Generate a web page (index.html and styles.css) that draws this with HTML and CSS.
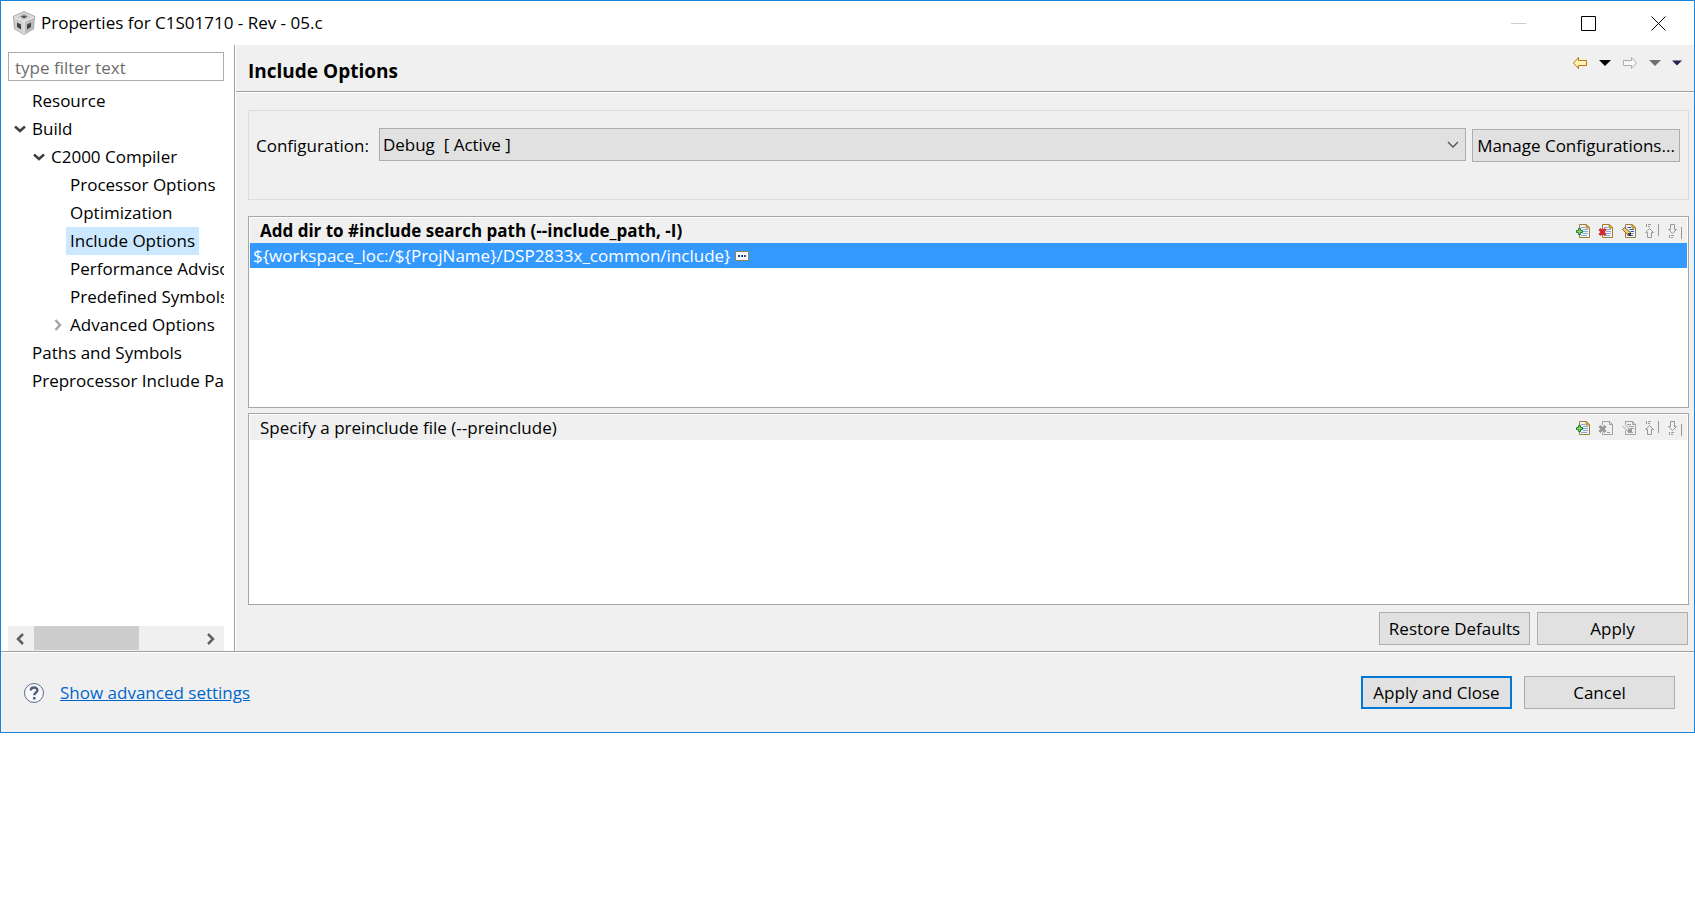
FILE: index.html
```html
<!DOCTYPE html>
<html lang="en">
<head>
    <meta charset="UTF-8">
    <meta name="viewport" content="width=device-width, initial-scale=1.0">
    <title>Properties for C1S01710 - Rev - 05.c</title>
    <link rel="stylesheet" href="styles.css">
</head>
<body>

<!-- Shared icons -->
<svg class="sprite" aria-hidden="true">
    <symbol id="icon-page" viewBox="0 0 16 16">
        <path d="M4.500 1.500h7l3 3v10h-10z" fill="#eef4fc" stroke="#a07c34"/>
        <path d="M11 1.500v3.500h3.500z" fill="#e8b850" stroke="#b8862c"/>
        <path d="M6 4.500h4M8 6.500h5M8 8.500h5M8 10.500h5M6 12.500h6" stroke="#8ba6d0"/>
    </symbol>
    <symbol id="icon-add" viewBox="0 0 16 16">
        <use href="#icon-page"/>
        <path d="M3.500 5.500h2v2h2v2h-2v2h-2v-2h-2v-2h2z" fill="#8fdc5a" stroke="#1d7a3c"/>
    </symbol>
    <symbol id="icon-delete" viewBox="0 0 16 16">
        <use href="#icon-page"/>
        <path d="M1.500 6l6 6M7.500 6l-6 6" stroke="#d42430" stroke-width="3"/>
    </symbol>
    <symbol id="icon-edit" viewBox="0 0 16 16">
        <use href="#icon-page"/>
        <path d="M7 4.500h3M9 6.500h4M10 8.500h3M7 12.500h5" stroke="#3a5a9a"/>
        <path d="M1.500 6.500l2-2 6 5v3h-2z" fill="#efc87c" stroke="#8a6428"/>
        <path d="M7 10h3v3H8z" fill="#333"/>
    </symbol>
    <symbol id="icon-delete-off" viewBox="0 0 16 16">
        <path d="M4.500 5v-3.500h7l3 3v10h-10v-2M11.500 1.500v3h3M9 12.500h3" fill="none" stroke="#a0a0a0"/>
        <path d="M1.500 6l6 6M7.500 6l-6 6" stroke="#989898" stroke-width="3"/>
    </symbol>
    <symbol id="icon-edit-off" viewBox="0 0 16 16">
        <path d="M4.500 4v-2.500h7l3 3v10h-10v-4M11.500 1.500v3h3M6 4.500h4M8 6.500h5M9 8.500h4M7 12.500h5" fill="none" stroke="#a0a0a0"/>
        <path d="M1.500 6l6 6M4 4.500l6 6" fill="none" stroke="#a0a0a0"/>
        <path d="M7 9h4v3H7z" fill="#989898"/>
    </symbol>
    <symbol id="icon-up" viewBox="0 0 16 16">
        <path d="M2.500 1v3M4 1.500h3M4 3.500h2M5.500 5.500l4 4h-2v5h-4v-5h-2z" fill="none" stroke="#989898"/>
        <path d="M14.500 1v12" stroke="#989898"/>
    </symbol>
    <symbol id="icon-down" viewBox="0 0 16 16">
        <path d="M3.500 1.500h4v5h2l-4 4-4-4h2zM2.500 12v3M4 12.500h3M4 14.500h2" fill="none" stroke="#989898"/>
        <path d="M14.500 4v12" stroke="#989898"/>
    </symbol>
    <symbol id="icon-chevron" viewBox="0 0 12 12">
        <path d="M1 3.500l5 4.500 5-4.500" fill="none" stroke="currentColor" stroke-width="2.500"/>
    </symbol>
    <symbol id="icon-caret" viewBox="0 0 12 12">
        <path d="M0 3h12L6 9z" fill="currentColor"/>
    </symbol>
</svg>

<div class="dialog">
    <header class="titlebar">
        <svg class="app-icon" viewBox="0 0 24 24" aria-hidden="true">
            <path d="M12 0l11 5-1 13-10 6-10-6L1 5z" fill="#a8a8a8"/>
            <path d="M12 1l10 4.500L12 10 2 5.500z" fill="#d8d8d8"/>
            <path d="M2 6.500l9.500 4.500v12L3 18z" fill="#d0d0d0"/>
            <path d="M22 6.500L12.500 11v12l8.500-5z" fill="#bcbcbc"/>
            <path d="M12 3.500l4 2-4 2-4-2z" fill="#505050"/>
            <path d="M5 11.500l4 2v5l-4-2.500zM15 13.500l4-2v4.500l-4 2.500z" fill="#444"/>
            <path d="M8.500 2.500l10 4.500M15.500 2.500L5.500 7" stroke="#bbb" stroke-width=".6"/>
            <path d="M2 6l10 4.700L22 6M12 10.700V23" fill="none" stroke="#f4f4f4" stroke-width="1.200"/>
        </svg>
        <h1>Properties for C1S01710 - Rev - 05.c</h1>
        <div class="window-buttons">
            <button type="button" aria-label="Minimize" disabled><svg viewBox="0 0 16 16"><path d="M0 8.500h15" stroke="#ccc"/></svg></button>
            <button type="button" aria-label="Maximize"><svg viewBox="0 0 16 16"><path d="M.5 1.500h14v14H.5z" fill="none" stroke="#000"/></svg></button>
            <button type="button" aria-label="Close"><svg viewBox="0 0 16 16"><path d="M.5 1.500l14 14M14.500 1.500l-14 14" stroke="#000"/></svg></button>
        </div>
    </header>

    <div class="main">
        <nav class="sidebar">
            <input class="filter" type="text" placeholder="type filter text" aria-label="Filter">
            <ul class="tree">
                <li><span class="node">Resource</span></li>
                <li>
                    <span class="node"><svg class="twist"><use href="#icon-chevron"/></svg>Build</span>
                    <ul>
                        <li>
                            <span class="node"><svg class="twist"><use href="#icon-chevron"/></svg>C2000 Compiler</span>
                            <ul>
                                <li><span class="node">Processor Options</span></li>
                                <li><span class="node">Optimization</span></li>
                                <li><span class="node selected">Include Options</span></li>
                                <li><span class="node">Performance Advisor</span></li>
                                <li><span class="node">Predefined Symbols</span></li>
                                <li><span class="node"><svg class="twist closed"><use href="#icon-chevron"/></svg>Advanced Options</span></li>
                            </ul>
                        </li>
                    </ul>
                </li>
                <li><span class="node">Paths and Symbols</span></li>
                <li><span class="node">Preprocessor Include Paths</span></li>
            </ul>
            <div class="scrollbar">
                <button type="button" aria-label="Scroll left"><svg viewBox="0 0 12 12"><path d="M8 1L3 6l5 5" fill="none" stroke="#606060" stroke-width="2.500"/></svg></button>
                <div class="track"><div class="thumb"></div></div>
                <button type="button" aria-label="Scroll right"><svg viewBox="0 0 12 12"><path d="M3 1l5 5-5 5" fill="none" stroke="#606060" stroke-width="2.500"/></svg></button>
            </div>
        </nav>

        <section class="page">
            <div class="page-header">
                <h2>Include Options</h2>
                <div class="history">
                    <button type="button" aria-label="Back"><svg class="arrow" viewBox="0 0 16 14"><path d="M1.500 7l5-5.500v3h8v5h-8v3z" fill="#fff3b8" stroke="#b8780c"/></svg></button>
                    <button type="button" aria-label="Back history"><svg class="caret"><use href="#icon-caret"/></svg></button>
                    <button type="button" aria-label="Forward" disabled><svg class="arrow" viewBox="0 0 16 14"><path d="M14.500 7l-5-5.500v3h-8v5h8v3z" fill="#f6f6f6" stroke="#acacac"/></svg></button>
                    <button type="button" aria-label="Forward history" disabled><svg class="caret muted"><use href="#icon-caret"/></svg></button>
                    <button type="button" aria-label="Menu"><svg class="caret menu"><use href="#icon-caret"/></svg></button>
                </div>
            </div>

            <div class="page-body">
                <div class="config">
                    <label for="configuration">Configuration:</label>
                    <div class="select">
                        <select id="configuration">
                            <option>Debug&nbsp; [ Active ]</option>
                        </select>
                        <svg viewBox="0 0 12 12" aria-hidden="true"><path d="M1 3l5 5 5-5" fill="none" stroke="#505050" stroke-width="1.300"/></svg>
                    </div>
                    <button type="button" class="btn btn-manage">Manage Configurations...</button>
                </div>

                <div class="list">
                    <div class="list-header">
                        <h3 class="strong">Add dir to #include search path (--include_path, -I)</h3>
                        <div class="tools">
                            <button type="button" aria-label="Add"><svg><use href="#icon-add"/></svg></button>
                            <button type="button" aria-label="Delete"><svg><use href="#icon-delete"/></svg></button>
                            <button type="button" aria-label="Edit"><svg><use href="#icon-edit"/></svg></button>
                            <button type="button" aria-label="Move up" disabled><svg><use href="#icon-up"/></svg></button>
                            <button type="button" aria-label="Move down" disabled><svg><use href="#icon-down"/></svg></button>
                        </div>
                    </div>
                    <ul class="rows">
                        <li>${workspace_loc:/${ProjName}/DSP2833x_common/include}
                            <svg class="more" viewBox="0 0 14 10"><path d="M.5.500h13v9H.5z" fill="#f8f8f8" stroke="#8c8468"/><path d="M3 4h2v2H3zM6 4h2v2H6zM9 4h2v2H9z" fill="#2c4c8c"/></svg>
                        </li>
                    </ul>
                </div>

                <div class="list">
                    <div class="list-header">
                        <h3>Specify a preinclude file (--preinclude)</h3>
                        <div class="tools">
                            <button type="button" aria-label="Add"><svg><use href="#icon-add"/></svg></button>
                            <button type="button" aria-label="Delete" disabled><svg><use href="#icon-delete-off"/></svg></button>
                            <button type="button" aria-label="Edit" disabled><svg><use href="#icon-edit-off"/></svg></button>
                            <button type="button" aria-label="Move up" disabled><svg><use href="#icon-up"/></svg></button>
                            <button type="button" aria-label="Move down" disabled><svg><use href="#icon-down"/></svg></button>
                        </div>
                    </div>
                    <ul class="rows"></ul>
                </div>

                <div class="page-buttons">
                    <button type="button" class="btn">Restore Defaults</button>
                    <button type="button" class="btn">Apply</button>
                </div>
            </div>
        </section>
    </div>

    <footer class="footer">
        <button type="button" class="help" aria-label="Help">
            <svg viewBox="0 0 20 20"><circle cx="10" cy="10" r="9.500" fill="#f8f8fa" stroke="#5c6c88"/><path d="M6.800 7.500C6.800 3.500 13.400 3.700 13.400 7.200c0 2.300-3.200 2.500-3.200 5" fill="none" stroke="#505f7c" stroke-width="2.400"/><path d="M9 14h2.500v2.500H9z" fill="#505f7c"/></svg>
        </button>
        <a href="#">Show advanced settings</a>
        <div class="footer-buttons">
            <button type="button" class="btn btn-default">Apply and Close</button>
            <button type="button" class="btn">Cancel</button>
        </div>
    </footer>
</div>

</body>
</html>
```
FILE: styles.css
```css
* {
    box-sizing: border-box;
}

body {
    margin: 0;
    background-color: #fff;
    color: #000;
    font-family: "Segoe UI", "Open Sans", sans-serif;
    font-size: 17px;
    line-height: 24px;
}

h1, h2, h3, ul {
    margin: 0;
    padding: 0;
    font-size: inherit;
    font-weight: normal;
    list-style: none;
}

button, input, select {
    font: inherit;
    color: inherit;
}

button {
    padding: 0;
    border: none;
    background: none;
}

svg {
    display: block;
    flex: none;
}

.sprite {
    display: none;
}

.dialog {
    border: 1px solid #1883d7;
    background-color: #f0f0f0;
}

/* Title bar */
.titlebar {
    display: flex;
    align-items: center;
    height: 44px;
    padding-left: 11px;
    background-color: #fff;
}

.app-icon {
    width: 24px;
    height: 24px;
    margin-right: 5px;
}

.window-buttons {
    display: flex;
    margin-left: auto;
}

.window-buttons button {
    display: flex;
    justify-content: center;
    align-items: center;
    width: 70px;
    height: 44px;
}

.window-buttons svg {
    width: 16px;
    height: 16px;
}

/* Tree */
.main {
    display: flex;
    border-bottom: 1px solid #a0a0a0;
}

.sidebar {
    display: flex;
    flex-direction: column;
    flex: none;
    width: 234px;
    padding: 7px 10px 0 7px;
    border-right: 1px solid #a0a0a0;
    background-color: #fff;
}

.filter {
    width: 100%;
    height: 29px;
    padding: 1px 6px 0;
    border: 1px solid #abadb3;
    border-radius: 0;
    background-color: #fff;
}

.filter::placeholder {
    color: #6d6d6d;
    opacity: 1;
}

.tree {
    flex: 1;
    padding: 6px 0 0 20px;
    overflow: hidden;
    white-space: nowrap;
}

.tree ul {
    padding-left: 19px;
}

.node {
    display: inline-flex;
    align-items: center;
    height: 28px;
    padding: 0 4px;
    vertical-align: top;
}

.node.selected {
    background-color: #cce8ff;
}

.twist {
    width: 12px;
    height: 12px;
    margin: 0 6px 0 -18px;
    color: #404040;
}

.twist.closed {
    color: #a6a6a6;
    transform: rotate(-90deg);
}

.scrollbar {
    display: flex;
    height: 25px;
    background-color: #f0f0f0;
}

.scrollbar button {
    display: flex;
    justify-content: center;
    align-items: center;
    width: 26px;
}

.scrollbar svg {
    width: 12px;
    height: 12px;
}

.track {
    flex: 1;
}

.thumb {
    width: 64%;
    height: 24px;
    background-color: #cdcdcd;
}

/* Page */
.page {
    flex: 1;
    min-width: 0;
    border-left: 1px solid #fff;
}

.page-header {
    display: flex;
    justify-content: space-between;
    height: 47px;
    padding: 14px 12px 0 12px;
    border-bottom: 1px solid #a0a0a0;
}

.page-header h2 {
    font-size: 19px;
    font-weight: bold;
}

.history {
    display: flex;
    align-items: center;
    gap: 11px;
    height: 8px;
}

.arrow {
    width: 16px;
    height: 14px;
}

.caret {
    width: 12px;
    height: 12px;
}

.caret.muted {
    color: #707074;
}

.caret.menu {
    width: 10px;
    height: 10px;
    color: #2c1c50;
}

.page-body {
    padding: 17px 5px 6px 12px;
    border-top: 1px solid #fff;
}

.config {
    display: flex;
    align-items: flex-start;
    height: 90px;
    margin-bottom: 16px;
    padding: 17px 8px 0 7px;
    border: 1px solid #dcdcdc;
}

.config label {
    margin-right: 10px;
    padding-top: 6px;
}

.select {
    display: grid;
    flex: 1;
    align-items: center;
    margin-right: 6px;
}

.select select, .select svg {
    grid-area: 1 / 1;
}

.select select {
    width: 100%;
    height: 33px;
    padding: 0 3px;
    border: 1px solid #adadad;
    border-radius: 0;
    background-color: #e1e1e1;
    appearance: none;
}

.select svg {
    justify-self: end;
    width: 12px;
    height: 12px;
    margin-right: 7px;
    pointer-events: none;
}

.btn {
    min-width: 151px;
    height: 33px;
    padding: 0 4px;
    border: 1px solid #adadad;
    background-color: #e1e1e1;
}

.btn-manage {
    min-width: 208px;
    margin-top: 1px;
}

.btn-default {
    border: 2px solid #0078d7;
}

.list {
    min-height: 192px;
    margin-bottom: 5px;
    padding: 1px;
    border: 1px solid #a6a6aa;
    background-color: #fff;
}

.list-header {
    display: flex;
    justify-content: space-between;
    align-items: center;
    height: 25px;
    padding: 0 4px 0 10px;
    background-color: #f0f0f0;
}

.strong {
    font-weight: bold;
}

.tools {
    display: flex;
    gap: 7px;
}

.tools svg {
    width: 16px;
    height: 16px;
}

.rows li {
    display: flex;
    align-items: center;
    gap: 4px;
    height: 25px;
    padding-left: 3px;
    background-color: #3399ff;
    color: #fff;
}

.more {
    width: 14px;
    height: 10px;
}

.page-buttons {
    display: flex;
    justify-content: flex-end;
    gap: 7px;
    padding: 2px 1px 0 0;
}

/* Footer */
.footer {
    display: flex;
    align-items: center;
    height: 80px;
    padding: 0 19px 0 23px;
    border-top: 1px solid #fff;
}

.help svg {
    width: 20px;
    height: 20px;
}

.footer a {
    margin-left: 16px;
    color: #0066cc;
}

.footer-buttons {
    display: flex;
    gap: 12px;
    margin-left: auto;
}
```
